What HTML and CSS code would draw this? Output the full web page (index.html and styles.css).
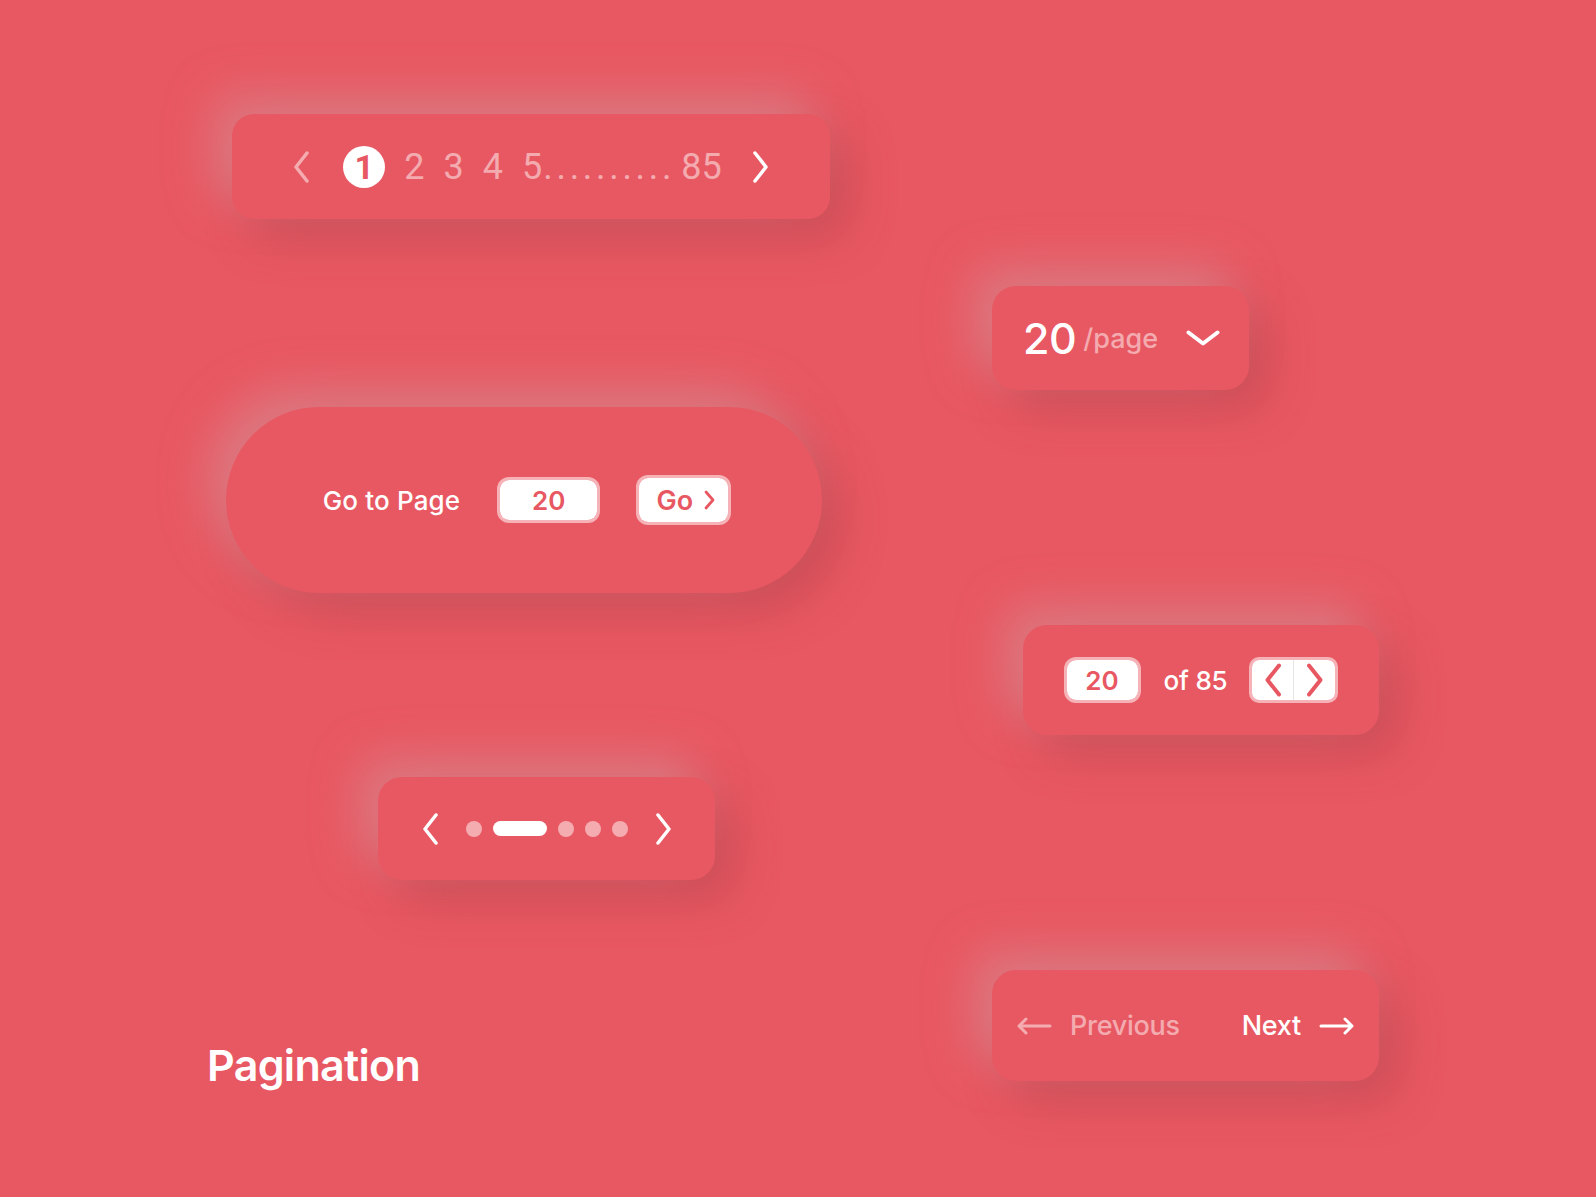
FILE: index.html
```html
<!DOCTYPE html>
<html lang="en">
<head>
<meta charset="utf-8">
<title>Pagination</title>
<link rel="stylesheet" href="styles.css">
</head>
<body>
<main class="page">
  <section class="col col-left">
    <!-- numbered pager -->
    <div class="card pager">
      <svg class="chev chev-faded" width="16" height="32" viewBox="0 0 16 32"><path d="M14 2 L3 16 L14 30"/></svg>
      <span class="current">1</span>
      <span class="num">2</span>
      <span class="num">3</span>
      <span class="num">4</span>
      <span class="num num-gap">5<span class="ellipsis">..........</span></span>
      <span class="num last">85</span>
      <svg class="chev chev-white" width="16" height="32" viewBox="0 0 16 32"><path d="M2 2 L13 16 L2 30"/></svg>
    </div>

    <!-- jump to page -->
    <div class="card goto">
      <span class="goto-label">Go to Page</span>
      <span class="field field-goto">20</span>
      <button class="go-btn">Go
        <svg width="11" height="20" viewBox="0 0 11 20"><path d="M2 2 L9 10 L2 18"/></svg>
      </button>
    </div>

    <!-- dot pager -->
    <div class="card dots">
      <svg class="chev chev-white" width="16" height="32" viewBox="0 0 16 32"><path d="M14 2 L3 16 L14 30"/></svg>
      <span class="dot-row">
        <span class="dot"></span>
        <span class="dot active"></span>
        <span class="dot"></span>
        <span class="dot"></span>
        <span class="dot"></span>
      </span>
      <svg class="chev chev-white" width="16" height="32" viewBox="0 0 16 32"><path d="M2 2 L13 16 L2 30"/></svg>
    </div>

    <h1 class="title">Pagination</h1>
  </section>

  <section class="col col-right">
    <!-- page size -->
    <div class="card per-page">
      <span class="pp-count">20</span>
      <span class="pp-unit">/page</span>
      <svg class="pp-caret" width="34" height="16" viewBox="0 0 34 16"><path d="M2.5 2.5 L17 13.5 L31.5 2.5"/></svg>
    </div>

    <!-- page of total -->
    <div class="card of-total">
      <span class="field field-small">20</span>
      <span class="of-label">of 85</span>
      <span class="stepper">
        <span class="step"><svg width="18" height="34" viewBox="0 0 18 34"><path d="M15 2.5 L3.5 17 L15 31.5"/></svg></span>
        <span class="step step-next"><svg width="18" height="34" viewBox="0 0 18 34"><path d="M3 2.5 L14.5 17 L3 31.5"/></svg></span>
      </span>
    </div>

    <!-- previous / next -->
    <div class="card prev-next">
      <span class="pn pn-prev">
        <svg width="35" height="18" viewBox="0 0 35 18"><path d="M33 9 H2 M9 2 L2 9 L9 16"/></svg>
        Previous
      </span>
      <span class="pn pn-next">
        Next
        <svg width="35" height="18" viewBox="0 0 35 18"><path d="M2 9 H33 M26 2 L33 9 L26 16"/></svg>
      </span>
    </div>
  </section>
</main>
</body>
</html>
```

FILE: styles.css
```css
* { box-sizing: border-box; }

html, body {
  margin: 0;
  padding: 0;
}

body {
  background: #E85862;
  font-family: Inter, "Noto Sans", sans-serif;
  color: #fff;
}

.page {
  width: 1596px;
  height: 1197px;
  overflow: hidden;
  display: grid;
  grid-template-columns: 992px 1fr;
}

.col {
  display: flex;
  flex-direction: column;
  align-items: flex-start;
}

/* soft extruded surface */
.card {
  background: #E85862;
  display: flex;
  align-items: center;
  justify-content: center;
  border-radius: 22px;
  box-shadow:
    -18px -18px 46px rgba(214, 150, 156, 0.55),
    18px 18px 46px rgba(168, 62, 72, 0.45);
}

svg path {
  fill: none;
  stroke-linecap: round;
  stroke-linejoin: round;
}

.chev path { stroke-width: 3.5; }
.chev-faded path { stroke: rgba(255, 255, 255, 0.5); }
.chev-white path { stroke: #fff; }

/* numbered pager */
.pager {
  margin: 114px 0 0 232px;
  width: 598px;
  height: 105px;
  font-family: Roboto, "Liberation Sans", sans-serif;
  font-size: 36px;
  color: rgba(255, 255, 255, 0.5);
}

.current {
  width: 42px;
  height: 42px;
  margin: 0 19px 0 34px;
  border-radius: 50%;
  background: #fff;
  color: #E85862;
  font-weight: 700;
  font-size: 34px;
  display: flex;
  align-items: center;
  justify-content: center;
  line-height: 1;
}

.num {
  margin-right: 19px;
  line-height: 1;
}

.num.num-gap { margin-right: 6px; }
.num.last { margin-right: 31px; }

.ellipsis {
  letter-spacing: 3.7px;
  margin-left: 1px;
}

/* jump to page */
.goto {
  margin: 188px 0 0 226px;
  width: 596px;
  height: 186px;
  border-radius: 93px;
  padding-left: 6px;
}

.goto-label {
  font-size: 26px;
  font-weight: 500;
  letter-spacing: 0.15px;
  margin-right: 37px;
}

.field {
  background: #fff;
  color: #E85862;
  border: 3px solid rgba(255, 255, 255, 0.55);
  background-clip: padding-box;
  border-radius: 12px;
  display: flex;
  align-items: center;
  justify-content: center;
  font-weight: 600;
  font-size: 26px;
}

.field-goto {
  width: 103px;
  height: 46px;
  margin-right: 36px;
}

.go-btn {
  width: 95px;
  height: 50px;
  background: #fff;
  background-clip: padding-box;
  border: 3px solid rgba(255, 255, 255, 0.55);
  border-radius: 12px;
  color: #E85862;
  font-family: Inter, "Noto Sans", sans-serif;
  font-weight: 600;
  font-size: 27px;
  display: flex;
  align-items: center;
  justify-content: center;
  gap: 11px;
  padding: 0 0 0 4px;
}

.go-btn svg path {
  stroke: #E85862;
  stroke-width: 2.8;
}

/* dot pager */
.dots {
  margin: 184px 0 0 378px;
  width: 337px;
  height: 103px;
  border-radius: 24px;
}

.dot-row {
  display: flex;
  align-items: center;
  gap: 11px;
  margin: 0 28px;
}

.dot {
  width: 16px;
  height: 16px;
  border-radius: 50%;
  background: rgba(255, 255, 255, 0.5);
}

.dot.active {
  width: 54px;
  height: 15px;
  border-radius: 8px;
  background: #fff;
}

.title {
  margin: 164px 0 0 207px;
  font-size: 43px;
  font-weight: 600;
  letter-spacing: -0.7px;
  line-height: 1;
}

/* page size */
.per-page {
  margin-top: 286px;
  width: 257px;
  height: 104px;
  justify-content: flex-start;
  padding-left: 31px;
  border-radius: 24px;
}

.pp-count {
  font-size: 43px;
  font-weight: 500;
  letter-spacing: -0.5px;
}

.pp-unit {
  font-size: 27px;
  font-weight: 500;
  color: rgba(255, 255, 255, 0.5);
  margin-left: 7px;
  margin-right: 28px;
}

.pp-caret path {
  stroke: #fff;
  stroke-width: 4;
}

/* page of total */
.of-total {
  margin: 235px 0 0 31px;
  width: 356px;
  height: 110px;
  border-radius: 24px;
}

.field-small {
  width: 77px;
  height: 46px;
}

.of-label {
  font-size: 26px;
  font-weight: 500;
  margin: 0 22px 0 23px;
  letter-spacing: -0.2px;
}

.stepper {
  width: 89px;
  height: 46px;
  background: #fff;
  background-clip: padding-box;
  border: 3px solid rgba(255, 255, 255, 0.55);
  border-radius: 10px;
  display: flex;
}

.step {
  flex: 1;
  display: flex;
  align-items: center;
  justify-content: center;
}

.step-next {
  border-left: 1px solid #e6e6e6;
}

.step svg path {
  stroke: #E85862;
  stroke-width: 4;
}

/* previous / next */
.prev-next {
  margin-top: 235px;
  width: 387px;
  height: 111px;
  border-radius: 24px;
}

.pn {
  display: flex;
  align-items: center;
  gap: 18px;
  font-size: 27px;
  font-weight: 500;
  letter-spacing: -0.3px;
}

.pn-prev {
  color: rgba(255, 255, 255, 0.5);
  margin-right: 62px;
}

.pn-prev svg path {
  stroke: rgba(255, 255, 255, 0.5);
  stroke-width: 3;
}

.pn-next svg path {
  stroke: #fff;
  stroke-width: 3;
}
```
